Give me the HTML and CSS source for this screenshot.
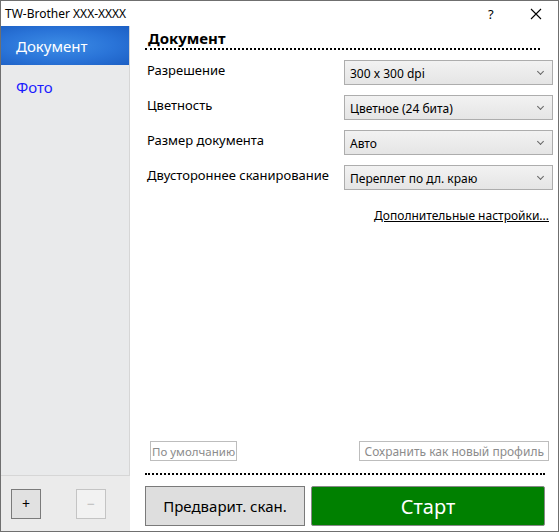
FILE: index.html
```html
<!DOCTYPE html>
<html lang="ru">
<head>
    <meta charset="UTF-8">
    <title>TW-Brother XXX-XXXX</title>
    <link rel="stylesheet" href="styles.css">
</head>
<body>
    <div class="window">
        <div class="titlebar">
            <span class="title">TW-Brother XXX-XXXX</span>
            <span class="help">?</span>
            <span class="close">
                <svg width="12" height="12" viewBox="0 0 12 12"><path d="M1 1L11 11M11 1L1 11" stroke="#000" stroke-width="1.1"/></svg>
            </span>
        </div>

        <div class="body">
            <div class="sidebar">
                <div class="nav">
                    <div class="nav-item selected">Документ</div>
                    <div class="nav-item">Фото</div>
                </div>
                <div class="profile-buttons">
                    <button class="small-btn">+</button>
                    <button class="small-btn disabled">&minus;</button>
                </div>
            </div>

            <div class="main">
                <h2 class="section-title">Документ</h2>

                <div class="settings">
                    <div class="row">
                        <label>Разрешение</label>
                        <div class="select"><span>300 x 300 dpi</span><i class="chev"></i></div>
                    </div>
                    <div class="row">
                        <label>Цветность</label>
                        <div class="select"><span>Цветное (24 бита)</span><i class="chev"></i></div>
                    </div>
                    <div class="row">
                        <label>Размер документа</label>
                        <div class="select"><span>Авто</span><i class="chev"></i></div>
                    </div>
                    <div class="row">
                        <label>Двустороннее сканирование</label>
                        <div class="select"><span>Переплет по дл. краю</span><i class="chev"></i></div>
                    </div>
                </div>

                <div class="more"><a href="#">Дополнительные настройки...</a></div>

                <div class="spacer"></div>

                <div class="profile-row">
                    <button class="flat-btn narrow">По умолчанию</button>
                    <button class="flat-btn">Сохранить как новый профиль</button>
                </div>

                <div class="dots"></div>

                <div class="actions">
                    <button class="preview">Предварит. скан.</button>
                    <button class="start">Старт</button>
                </div>
            </div>
        </div>
    </div>
</body>
</html>
```

FILE: styles.css
```css
html, body {
    margin: 0;
    padding: 0;
    background: #fff;
}

body {
    font-family: "Noto Sans", "Open Sans", sans-serif;
    color: #000;
}

.window {
    box-sizing: border-box;
    width: 559px;
    height: 532px;
    border: 1px solid #6f6f6f;
    display: flex;
    flex-direction: column;
    background: #fff;
}

.titlebar {
    height: 25px;
    display: flex;
    align-items: center;
    font-size: 12px;
}

.title {
    padding-left: 4px;
    flex: 1;
}

.help {
    width: 20px;
    font-size: 13px;
    margin-right: 22px;
}

.close {
    width: 28px;
    display: flex;
}

.body {
    flex: 1;
    display: flex;
}

/* left column */
.sidebar {
    width: 129px;
    background: #ebebeb;
    display: flex;
    flex-direction: column;
}

.nav {
    flex: 1;
    background: #e9eaeb;
    border-right: 1px solid #d6d6d6;
    border-bottom: 1px solid #d6d6d6;
}

.nav-item {
    height: 40px;
    line-height: 44px;
    padding-left: 15px;
    font-size: 15px;
    color: #1a1aff;
}

.nav-item.selected {
    color: #fff;
    background: radial-gradient(ellipse at 45% 50%, #3d8de6 0%, #2a74d8 55%, #1c5fc4 100%);
    height: 39px;
    line-height: 41px;
}

.profile-buttons {
    height: 55px;
    display: flex;
    align-items: center;
    padding-left: 10px;
    gap: 35px;
}

.small-btn {
    width: 30px;
    height: 30px;
    padding: 0;
    font-size: 14px;
    font-family: inherit;
    background: #e1e1e1;
    border: 1px solid #7a7a7a;
    color: #000;
}

.small-btn.disabled {
    background: #f2f2f2;
    border-color: #c4c4c4;
    color: #bdbdbd;
}

/* right part */
.main {
    flex: 1;
    display: flex;
    flex-direction: column;
    padding: 0 5px 5px 15px;
}

.section-title {
    margin: 2px 13px 0 3px;
    font-size: 15px;
    font-weight: bold;
    line-height: 20px;
}

.section-title::after {
    content: "";
    display: block;
    margin-left: -3px;
    border-bottom: 2px dotted #000;
}

.settings {
    margin-top: 10px;
    display: flex;
    flex-direction: column;
    gap: 10px;
}

.row {
    display: flex;
    align-items: flex-start;
    height: 25px;
}

.row label {
    flex: 1;
    font-size: 13px;
    padding-left: 2px;
    line-height: 20px;
}

.select {
    box-sizing: border-box;
    width: 209px;
    height: 25px;
    border: 1px solid #adadad;
    background: linear-gradient(#f2f2f2, #e5e5e5);
    display: flex;
    align-items: center;
    padding: 2px 0 0 5px;
    font-size: 12px;
}

.select span {
    flex: 1;
}

.chev {
    width: 4px;
    height: 4px;
    border-right: 1.2px solid #666;
    border-bottom: 1.2px solid #666;
    transform: rotate(45deg);
    margin: -4px 9px 0 0;
}

.more {
    text-align: right;
    margin-top: 17px;
    padding-right: 4px;
    font-size: 12px;
}

.more a {
    color: #000;
}

.spacer {
    flex: 1;
}

.profile-row {
    display: flex;
    justify-content: space-between;
    padding: 0 4px 0 5px;
}

.flat-btn {
    height: 20px;
    padding: 0 4px;
    font-family: inherit;
    font-size: 12px;
    color: #8c8c8c;
    background: #fff;
    border: 1px solid #bdbdbd;
}

.flat-btn.narrow {
    padding: 0 1px;
    font-size: 11.5px;
}

.dots {
    margin-top: 12px;
    margin-right: 8px;
    border-bottom: 2px dotted #000;
}

.actions {
    display: flex;
    gap: 6px;
    margin-top: 11px;
}

.preview {
    width: 160px;
    height: 40px;
    font-family: inherit;
    font-size: 15px;
    background: #dedede;
    border: 1px solid #7a7a7a;
    color: #000;
}

.start {
    width: 234px;
    height: 40px;
    font-family: inherit;
    font-size: 20px;
    background: #008000;
    border: 1px solid #888;
    border-radius: 2px;
    color: #fff;
}
```
